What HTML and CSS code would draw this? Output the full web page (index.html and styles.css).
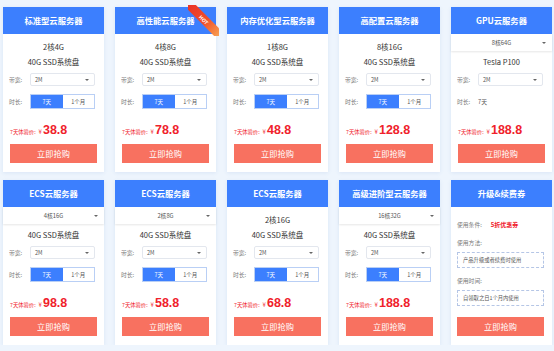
FILE: index.html
```html
<!DOCTYPE html>
<html lang="zh-CN">
<head>
    <meta charset="UTF-8">
    <title>云服务器</title>
    <link rel="stylesheet" href="styles.css">
</head>
<body>
    <div class="grid">
        <!-- row 1 -->
        <div class="card">
            <div class="card-head">标准型云服务器</div>
            <div class="specs">
                <div class="spec">2核4G</div>
                <div class="spec">40G SSD系统盘</div>
            </div>
            <div class="row"><span class="lbl">带宽:</span><div class="select"><span>2M</span><i class="arrow"></i></div></div>
            <div class="row tall"><span class="lbl">时长:</span><div class="tabs"><span class="on">7天</span><span>1个月</span></div></div>
            <div class="price"><span class="tip">7天体验价:</span><span class="yen">¥</span><b>38.8</b></div>
            <div class="buy">立即抢购</div>
        </div>
        <div class="card">
            <div class="hot-wrap"><div class="hot">HOT</div></div>
            <div class="card-head">高性能云服务器</div>
            <div class="specs">
                <div class="spec">4核8G</div>
                <div class="spec">40G SSD系统盘</div>
            </div>
            <div class="row"><span class="lbl">带宽:</span><div class="select"><span>2M</span><i class="arrow"></i></div></div>
            <div class="row tall"><span class="lbl">时长:</span><div class="tabs"><span class="on">7天</span><span>1个月</span></div></div>
            <div class="price"><span class="tip">7天体验价:</span><span class="yen">¥</span><b>78.8</b></div>
            <div class="buy">立即抢购</div>
        </div>
        <div class="card">
            <div class="card-head">内存优化型云服务器</div>
            <div class="specs">
                <div class="spec">1核8G</div>
                <div class="spec">40G SSD系统盘</div>
            </div>
            <div class="row"><span class="lbl">带宽:</span><div class="select"><span>2M</span><i class="arrow"></i></div></div>
            <div class="row tall"><span class="lbl">时长:</span><div class="tabs"><span class="on">7天</span><span>1个月</span></div></div>
            <div class="price"><span class="tip">7天体验价:</span><span class="yen">¥</span><b>48.8</b></div>
            <div class="buy">立即抢购</div>
        </div>
        <div class="card">
            <div class="card-head">高配置云服务器</div>
            <div class="specs">
                <div class="spec">8核16G</div>
                <div class="spec">40G SSD系统盘</div>
            </div>
            <div class="row"><span class="lbl">带宽:</span><div class="select"><span>2M</span><i class="arrow"></i></div></div>
            <div class="row tall"><span class="lbl">时长:</span><div class="tabs"><span class="on">7天</span><span>1个月</span></div></div>
            <div class="price"><span class="tip">7天体验价:</span><span class="yen">¥</span><b>128.8</b></div>
            <div class="buy">立即抢购</div>
        </div>
        <div class="card">
            <div class="card-head">GPU云服务器</div>
            <div class="full-select"><span>8核64G</span><i class="arrow"></i></div>
            <div class="spec">Tesla P100</div>
            <div class="row"><span class="lbl">带宽:</span><div class="select"><span>2M</span><i class="arrow"></i></div></div>
            <div class="row tall"><span class="lbl">时长:</span><span class="val">7天</span></div>
            <div class="price"><span class="tip">7天体验价:</span><span class="yen">¥</span><b>188.8</b></div>
            <div class="buy">立即抢购</div>
        </div>

        <!-- row 2 -->
        <div class="card">
            <div class="card-head">ECS云服务器</div>
            <div class="full-select"><span>4核16G</span><i class="arrow"></i></div>
            <div class="spec">40G SSD系统盘</div>
            <div class="row"><span class="lbl">带宽:</span><div class="select"><span>2M</span><i class="arrow"></i></div></div>
            <div class="row tall"><span class="lbl">时长:</span><div class="tabs"><span class="on">7天</span><span>1个月</span></div></div>
            <div class="price"><span class="tip">7天体验价:</span><span class="yen">¥</span><b>98.8</b></div>
            <div class="buy">立即抢购</div>
        </div>
        <div class="card">
            <div class="card-head">ECS云服务器</div>
            <div class="full-select"><span>2核8G</span><i class="arrow"></i></div>
            <div class="spec">40G SSD系统盘</div>
            <div class="row"><span class="lbl">带宽:</span><div class="select"><span>2M</span><i class="arrow"></i></div></div>
            <div class="row tall"><span class="lbl">时长:</span><div class="tabs"><span class="on">7天</span><span>1个月</span></div></div>
            <div class="price"><span class="tip">7天体验价:</span><span class="yen">¥</span><b>58.8</b></div>
            <div class="buy">立即抢购</div>
        </div>
        <div class="card">
            <div class="card-head">ECS云服务器</div>
            <div class="specs">
                <div class="spec">2核16G</div>
                <div class="spec">40G SSD系统盘</div>
            </div>
            <div class="row"><span class="lbl">带宽:</span><div class="select"><span>2M</span><i class="arrow"></i></div></div>
            <div class="row tall"><span class="lbl">时长:</span><div class="tabs"><span class="on">7天</span><span>1个月</span></div></div>
            <div class="price"><span class="tip">7天体验价:</span><span class="yen">¥</span><b>68.8</b></div>
            <div class="buy">立即抢购</div>
        </div>
        <div class="card">
            <div class="card-head">高级进阶型云服务器</div>
            <div class="full-select"><span>16核32G</span><i class="arrow"></i></div>
            <div class="spec">40G SSD系统盘</div>
            <div class="row"><span class="lbl">带宽:</span><div class="select"><span>2M</span><i class="arrow"></i></div></div>
            <div class="row tall"><span class="lbl">时长:</span><div class="tabs"><span class="on">7天</span><span>1个月</span></div></div>
            <div class="price"><span class="tip">7天体验价:</span><span class="yen">¥</span><b>188.8</b></div>
            <div class="buy">立即抢购</div>
        </div>
        <div class="card coupon">
            <div class="card-head">升级&amp;续费券</div>
            <div class="line first">使用条件:<span class="red">5折优惠券</span></div>
            <div class="line">使用方法:</div>
            <div class="dash">产品升级或者续费时使用</div>
            <div class="line">使用时间:</div>
            <div class="dash">自领取之日1个月内使用</div>
            <div class="buy">立即抢购</div>
        </div>
    </div>
</body>
</html>
```

FILE: styles.css
```css
body {
    margin: 0;
    background-color: #eef5fd;
    font-family: "Noto Sans CJK SC", "Noto Sans", sans-serif;
    color: #333;
}
.grid {
    display: grid;
    grid-template-columns: repeat(5, 101px);
    column-gap: 11px;
    row-gap: 8px;
    padding: 7px 0 0 3px;
}
.card {
    position: relative;
    background-color: #fff;
    padding-bottom: 9px;
    box-shadow: 0 1px 4px rgba(70, 120, 200, 0.12);
}
.card-head {
    height: 27px;
    line-height: 27px;
    background-color: #3c7ffe;
    color: #fff;
    font-size: 8.3px;
    font-weight: bold;
    text-align: center;
}
.specs {
    padding-top: 4.5px;
}
.spec {
    line-height: 15px;
    font-size: 7.5px;
    text-align: center;
    color: #333;
}
.full-select {
    height: 17px;
    margin-bottom: 2.5px;
    padding: 0 6px;
    display: flex;
    align-items: center;
    justify-content: center;
    position: relative;
    font-size: 5.8px;
    color: #555;
    box-shadow: 0 1px 2px rgba(0, 0, 0, 0.1);
}
.full-select .arrow {
    position: absolute;
    right: 6px;
    top: 7.5px;
}
.arrow {
    width: 0;
    height: 0;
    border-left: 2px solid transparent;
    border-right: 2px solid transparent;
    border-top: 2.5px solid #666;
}
.row {
    margin-top: 4.5px;
    height: 13px;
    display: flex;
    align-items: center;
    padding: 0 9px 0 6px;
}
.row.tall {
    margin-top: 8px;
    height: 15px;
}
.lbl {
    width: 21px;
    font-size: 5.8px;
    color: #777;
}
.val {
    font-size: 5.8px;
    color: #555;
}
.select {
    flex: 1;
    height: 13px;
    box-sizing: border-box;
    border: 1px solid #e3e7ee;
    border-radius: 2px;
    padding: 0 5px 0 4px;
    display: flex;
    align-items: center;
    justify-content: space-between;
    font-size: 5.5px;
    color: #555;
}
.tabs {
    flex: 1;
    height: 15px;
    display: flex;
    box-sizing: border-box;
    border: 1px solid #b9cff5;
}
.tabs span {
    flex: 1;
    display: flex;
    align-items: center;
    justify-content: center;
    font-size: 5.5px;
    color: #555;
}
.tabs .on {
    background-color: #3c7ffe;
    color: #fff;
}
.price {
    margin-top: 9px;
    height: 20px;
    display: flex;
    align-items: baseline;
    padding: 5px 0 0 7px;
    box-sizing: border-box;
    color: #f0212b;
}
.tip {
    font-size: 5.3px;
}
.yen {
    font-size: 6px;
    margin: 0 1px 0 3px;
}
.price b {
    font-family: "Liberation Sans", Arial, sans-serif;
    font-size: 12.5px;
    font-weight: bold;
}
.buy {
    margin: 6px 7px 0;
    height: 19px;
    line-height: 19px;
    background-color: #f87160;
    color: #fff;
    font-size: 8.2px;
    text-align: center;
}

/* corner ribbon */
.hot-wrap {
    position: absolute;
    top: -2px;
    right: -3px;
    width: 31px;
    height: 31px;
    overflow: hidden;
}
.hot {
    position: absolute;
    left: -8px;
    top: 10px;
    width: 48px;
    height: 9px;
    line-height: 9px;
    transform: rotate(45deg);
    background: linear-gradient(90deg, #ea2f26, #f0502c 55%, #f68a45 85%, #f8a85c);
    color: #fff;
    font-size: 5px;
    font-weight: bold;
    text-align: center;
}

/* coupon card */
.coupon .line {
    margin: 6px 7px 0 6px;
    line-height: 12px;
    font-size: 5.8px;
    color: #777;
}
.coupon .line.first {
    margin-top: 12px;
}
.red {
    margin-left: 9px;
    color: #f0212b;
    font-weight: bold;
    font-size: 6px;
}
.dash {
    margin: 3px 8px 0 6px;
    height: 16px;
    line-height: 14px;
    box-sizing: border-box;
    border: 1px dashed #b5c6e6;
    padding-left: 5px;
    font-size: 5.3px;
    color: #555;
}
.coupon .dash + .line {
    margin-top: 7px;
}
.coupon .buy {
    margin: 11px 8px 0 6px;
}
```
